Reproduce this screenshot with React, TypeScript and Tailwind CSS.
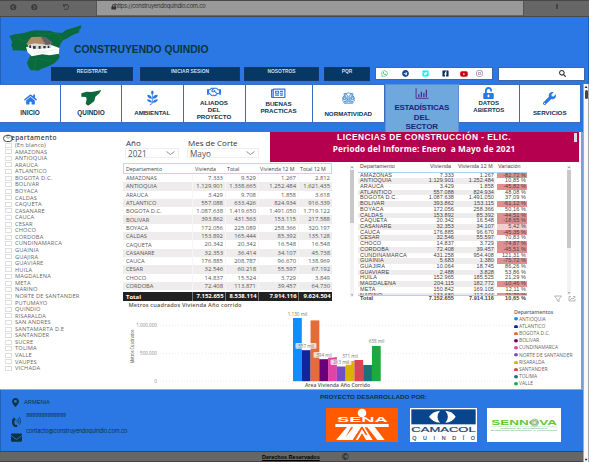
import type { ReactNode } from "react";
import {
  FaHome, FaRegHandshake, FaRegNewspaper, FaWrench, FaUnlockAlt, FaWhatsapp, FaTelegram,
  FaTwitterSquare, FaFacebookSquare, FaYoutube, FaInstagram, FaSearch, FaMapMarkerAlt,
  FaEnvelope, FaLock, FaChevronCircleLeft, FaChevronCircleRight, FaUndo, FaBalanceScale,
} from "react-icons/fa";

const departments = [
  "(En blanco)", "AMAZONAS", "ANTIOQUIA", "ARAUCA", "ATLANTICO", "BOGOTA D.C.", "BOLIVAR", "BOYACA",
  "CALDAS", "CAQUETA", "CASANARE", "CAUCA", "CESAR", "CHOCO", "CORDOBA", "CUNDINAMARCA", "GUAINIA",
  "GUAJIRA", "GUAVIARE", "HUILA", "MAGDALENA", "META", "NARINO", "NORTE DE SANTANDER", "PUTUMAYO",
  "QUINDIO", "RISARALDA", "SAN ANDRES", "SANTAMARTA D.E", "SANTANDER", "SUCRE", "TOLIMA", "VALLE",
  "VAUPES", "VICHADA",
];

const areas = [
  ["AMAZONAS", "7.333", "9.529", "1.267", "2.812"],
  ["ANTIOQUIA", "1.129.901", "1.338.665", "1.252.484", "1.621.435"],
  ["ARAUCA", "3.429", "9.708", "1.858", "3.618"],
  ["ATLANTICO", "557.088", "633.426", "824.934", "916.339"],
  ["BOGOTA D.C.", "1.087.638", "1.419.650", "1.491.050", "1.719.122"],
  ["BOLIVAR", "393.862", "431.563", "153.115", "217.588"],
  ["BOYACA", "172.056", "225.089", "258.366", "320.197"],
  ["CALDAS", "153.892", "165.444", "85.392", "135.128"],
  ["CAQUETA", "20.342", "20.342", "16.548", "16.548"],
  ["CASANARE", "32.353", "36.414", "34.107", "45.738"],
  ["CAUCA", "176.885", "208.787", "96.670", "138.969"],
  ["CESAR", "32.546", "60.218", "55.597", "67.192"],
  ["CHOCO", "14.837", "15.524", "3.729", "3.849"],
  ["CORDOBA", "72.408", "113.871", "39.457", "64.730"],
];

const variations = [
  ["AMAZONAS", "7.333", "1.267", "-82,72 %"],
  ["ANTIOQUIA", "1.129.901", "1.252.484", "10,85 %"],
  ["ARAUCA", "3.429", "1.858", "-45,82 %"],
  ["ATLANTICO", "557.088", "824.934", "48,08 %"],
  ["BOGOTA D.C.", "1.087.638", "1.491.050", "37,09 %"],
  ["BOLIVAR", "393.862", "153.115", "-61,12 %"],
  ["BOYACA", "172.056", "258.366", "50,16 %"],
  ["CALDAS", "153.892", "85.392", "-44,51 %"],
  ["CAQUETA", "20.342", "16.548", "-18,65 %"],
  ["CASANARE", "32.353", "34.107", "5,42 %"],
  ["CAUCA", "176.885", "96.670", "-45,35 %"],
  ["CESAR", "32.546", "55.597", "70,83 %"],
  ["CHOCO", "14.837", "3.729", "-74,87 %"],
  ["CORDOBA", "72.408", "39.457", "-45,51 %"],
  ["CUNDINAMARCA", "431.258", "954.408", "121,31 %"],
  ["GUAINIA", "5.683", "1.380", "-75,72 %"],
  ["GUAJIRA", "10.064", "18.745", "86,26 %"],
  ["GUAVIARE", "2.488", "3.828", "53,86 %"],
  ["HUILA", "152.965", "185.525", "21,29 %"],
  ["MAGDALENA", "204.115", "182.772", "-10,46 %"],
  ["META", "150.842", "169.105", "12,11 %"],
  ["NARINO", "133.680", "117.044", "-11,70 %"],
];

const bars = [
  { name: "ANTIOQUIA", color: "#118dff", top: 318 },
  { name: "ATLANTICO", color: "#12239e", top: 350.2 },
  { name: "BOGOTA D.C.", color: "#e66c37", top: 320.4 },
  { name: "BOLIVAR", color: "#6b007b", top: 359.2 },
  { name: "CUNDINAMARCA", color: "#e044a7", top: 357.2 },
  { name: "NORTE DE SANTANDER", color: "#744ec2", top: 366.5 },
  { name: "RISARALDA", color: "#d9b300", top: 361 },
  { name: "SANTANDER", color: "#d64550", top: 360 },
  { name: "TOLIMA", color: "#197278", top: 365 },
  { name: "VALLE", color: "#1aab40", top: 346 },
];

const barLabels = [
  { text: "1.130 mil", x: 297.5, y: 314, boxed: false },
  { text: "557 mil", x: 306, y: 346, boxed: true },
  { text: "394 mil", x: 324, y: 355, boxed: true },
  { text: "371 mil", x: 350, y: 356.5, boxed: true },
  { text: "263 mil", x: 341, y: 362.3, boxed: true },
  { text: "638 mil", x: 376.5, y: 341.5, boxed: false },
];

function Browser() {
  return (
    <div className="flex h-[17px] border-y border-[#484848] bg-[#666] text-[#3c3c3c]">
      <div className="flex w-[97px] items-start border-r border-[#555] pt-[2.5px] pl-[10px]">
        <FaChevronCircleLeft className="size-[6.5px]" />
        <FaChevronCircleRight className="ml-[14.5px] size-[6.5px]" />
        <FaUndo className="ml-[25px] size-[6px]" />
      </div>
      <div className="flex h-[14px] w-[426px] items-start bg-[#999] pt-[1px] pl-[14px] text-[#333]">
        <FaLock className="mt-[2px] size-[5.5px]" />
        <span className="-ml-[2px] font-[Inter,sans-serif] text-[5.9px] leading-[8px] tracking-[-0.3px]">https://construyendoquindio.com.co</span>
      </div>
      <div className="flex flex-1 justify-center border-l border-[#555] pt-[3px]">
        <span className="h-[5px] w-[2px] bg-[#444]" />
      </div>
    </div>
  );
}

function Logo() {
  return (
    <svg className="-mb-px h-[49px] w-[74px]" viewBox="24 75 222 147">
      <path fill="#0a6a3d" d="M28 108l16-5 28-4 18-5 16-3 44 1 12 5 24 2 12-9 18-5 14-5 14-4-1 8-6 7 1 6-24 10-12 8-13 6-8 12-5 14-1 14 4 9-4 8-11 11-15 8-24 9-10 6-24-2-6-10-4-12 4-10 6-10-8-16-46-1 1-6-5-9 4-10z" />
      <path fill="none" stroke="#298356" strokeWidth="1" d="M50 104l14 20 24-6M105 96l20 8 50-4M175 102l10 18M84 180l30-4 40 8M110 175l-8 34" />
      <path fill="#fff" d="M78 142l22-6 56 0 22 8-1 17-28 5-22-3-32 6-12-12z" />
      <path fill="#dadada" d="M83 130l20-4 50 5v13l-50 4-18-7z" />
      <path fill="#b18a66" d="M79 131l15-20 34-1 12 24-36-4-22 5z" />
      <path fill="#626366" d="M122 110l14 1 21 15v7l-20 2z" />
      <path fill="#333" d="M88 136h5v8h-5zM99 138h8v8h-8zM116 138h6v8h-6zM130 138h7v7h-7zM143 137h5v7h-5z" />
      <path stroke="#c8cccc" fill="none" d="M95 152l36 2 36-6M102 159l40-2" />
    </svg>
  );
}

function HeaderButton({ children, className }: { children: ReactNode; className: string }) {
  return (
    <div className={`h-[14px] border border-[#12386f] bg-[#073763] text-center text-[4.9px] leading-[8px] font-bold text-[#d5dee8] ${className}`}>
      {children}
    </div>
  );
}

function Header() {
  return (
    <header className="h-[67px] border-x border-[#2360b8] bg-[#2b78e4] font-['Liberation_Sans',sans-serif]">
      <div className="flex h-[50px] items-start pt-[8px] pl-[7px]">
        <Logo />
        <h1 className="-ml-[8px] mt-[18px] text-[10.3px] leading-[14px] font-bold text-[#0c343d]">CONSTRUYENDO QUINDIO</h1>
      </div>
      <div className="relative flex pl-[50px]">
        <HeaderButton className="w-[82px] tracking-[-0.06px]">REGISTRATE</HeaderButton>
        <HeaderButton className="ml-[7px] w-[100px]">INICIAR SESION</HeaderButton>
        <HeaderButton className="ml-[4px] w-[75px]">NOSOTROS</HeaderButton>
        <HeaderButton className="ml-[5px] w-[46px]">PQR</HeaderButton>
        <div className="ml-[5px] flex h-[13px] w-[118px] items-center border border-[#3d68a5] bg-white pl-[5px]">
          <FaWhatsapp className="size-[7px] text-[#2fae4a]" />
          <FaTelegram className="ml-[13.5px] size-[7px] text-[#114c92]" />
          <FaTwitterSquare className="ml-[13.5px] size-[7px] text-[#00f0ff]" />
          <FaFacebookSquare className="ml-[12.5px] size-[7px] text-[#0b2f5f]" />
          <FaYoutube className="ml-[11px] size-[8px] text-[#c90000]" />
          <FaInstagram className="ml-[8px] size-[7px] text-[#8e5573]" />
        </div>
        <div className="ml-[5px] flex h-[14px] w-[87px] items-center justify-end border border-[#3d68a5] bg-white pr-[18px] pb-[1px]">
          <FaSearch className="size-[7px] text-[#333]" />
        </div>
      </div>
    </header>
  );
}

function Tab({ icon, lines, className }: { icon: ReactNode; lines: string[]; className: string }) {
  return (
    <div className={`flex h-[39px] flex-col items-center border border-l-0 border-[#3a6cc0] bg-white leading-[7.2px] font-bold text-[#0b3554] ${className}`}>
      <span className="text-[#2b78e4]">{icon}</span>
      {lines.map((line) => <span key={line}>{line}</span>)}
    </div>
  );
}

function Nav() {
  return (
    <nav className="flex h-[48px] bg-[#2b78e4] font-['Liberation_Sans',sans-serif]">
      <Tab className="w-[61px] gap-[2.500px] pt-[8px] text-[6.4px]" icon={<FaHome className="size-[13px]" />} lines={["INICIO"]} />
      <Tab
        className="w-[61px] gap-[2.500px] pt-[5px] text-[6.4px]"
        icon={
          <svg className="h-[16px] w-[21px]" viewBox="0 0 63 48">
            <path fill="#0a6a3d" d="M1 10l16-5 14 1 13-2 17-4-6 10-12 10-3 13-11 9-8 5-7-6 3-14-2-6-14-1z" />
          </svg>
        }
        lines={["QUINDIO"]}
      />
      <Tab
        className="w-[61.5px] gap-[2.500px] pt-[5px] text-[6.2px]"
        icon={
          <svg className="h-[16px] w-[13px]" viewBox="0 0 39 48" fill="currentColor">
            <path d="M19 1q8 7 0 14q-8-7 0-14z" />
            <path d="M18 26Q4 26 4 14q12 0 14 12zM20 26q0-12 15-12q0 12-15 12zM18 38Q5 38 3 28q12 0 15 10zM20 38q2-10 16-10q-3 11-16 10z" />
            <path fill="none" stroke="currentColor" strokeWidth="2.500" d="M19 14v25q0 4-8 5" />
          </svg>
        }
        lines={["AMBIENTAL"]}
      />
      <Tab className="w-[62px] text-[6.2px]" icon={<FaRegHandshake className="size-[14px]" />} lines={["ALIADOS", "DEL", "PROYECTO"]} />
      <Tab className="w-[67px] pt-[1px] text-[6.2px]" icon={<FaRegNewspaper className="-mb-[1px] size-[14.5px]" />} lines={["BUENAS", "PRACTICAS"]} />
      <Tab
        className="w-[72.5px] gap-[6.500px] pt-[6.500px] text-[6.2px]"
        icon={<FaBalanceScale className="h-[12px] w-[13px] fill-white stroke-[#2b78e4] stroke-[40px]" />}
        lines={["NORMATIVIDAD"]}
      />
      <div className="flex h-[48px] w-[73.5px] flex-col items-center border border-b-0 border-[#5d8fd2] bg-[#6fa8dc] pt-[3px] text-[8px] leading-[9.6px] font-bold text-[#20247b]">
        <svg className="mb-[4px] h-[12px] w-[14px]" viewBox="0 0 42 36" fill="none" stroke="#4b2a94" strokeWidth="3">
          <path d="M2 1v32h40" />
          <path strokeWidth="4" d="M11 29v-9M19 29V12M27 29V16M35 29V6" />
        </svg>
        <span className="tracking-[-0.3px]">ESTADÍSTICAS</span>
        <span>DEL</span>
        <span className="tracking-[-0.15px]">SECTOR</span>
      </div>
      <Tab className="w-[61.5px] pt-[2px] text-[6px]" icon={<FaUnlockAlt className="mb-[1px] h-[12px] w-[11px]" />} lines={["DATOS", "ABIERTOS"]} />
      <Tab className="w-[60.5px] gap-[4.500px] pt-[6.500px] text-[6.2px]" icon={<FaWrench className="size-[13px]" />} lines={["SERVICIOS"]} />
    </nav>
  );
}

function DepartmentFilter() {
  return (
    <aside className="w-[123px] pt-[2px] pl-[3px] text-[#666]">
      <div className="flex h-[8px] items-center">
        <span className="flex h-[7px] w-[10px] items-center justify-center rounded-full border border-[#444] text-[5px] font-bold">©</span>
        <span className="-ml-[2px] text-[6.6px] leading-[8px] font-semibold tracking-[0.35px] text-[#444]">epartamento</span>
      </div>
      {departments.map((name) => (
        <div key={name} className="flex h-[6.57px] items-center gap-[3.5px] pl-[2px]">
          <span className="h-[5px] w-[6.5px] border border-[#dedede]" />
          <span className="text-[5.7px] leading-[6.5px] tracking-[0.16px] whitespace-nowrap">{name}</span>
        </div>
      ))}
    </aside>
  );
}

function Select({ label, value, className }: { label: string; value: string; className: string }) {
  return (
    <div className={className}>
      <div className="pl-[1px] text-[8px] leading-[11px] text-[#333]">{label}</div>
      <div className="flex h-[10px] items-center justify-between border border-[#eee] pr-[3px] pl-[2px] text-[8.2px] leading-[9px] text-[#555]">
        {value}
        <svg className="h-[4px] w-[9px]" viewBox="0 0 9 4" fill="none" stroke="#777" strokeWidth="0.8"><path d="M0.5 0.5l4 3 4-3" /></svg>
      </div>
    </div>
  );
}

const areaGrid = "grid grid-cols-[69px_33px_33px_40px_34px] items-center";

function AreaTable() {
  return (
    <div className="mt-[1px] w-[209px] text-[5.9px] leading-[8px] text-[#555]">
      <div className={`${areaGrid} h-[11px] border border-[#b9dced] text-[5.3px] text-[#444]`}>
        <span className="pl-[2px]">Departamento</span>
        <span className="pl-[2px]">Vivienda</span>
        <span className="pl-[1px]">Total</span>
        <span className="pl-[1px] whitespace-nowrap">Vivienda 12 M</span>
        <span className="pl-[1px] whitespace-nowrap">Total 12 M</span>
      </div>
      {areas.map(([name, ...values]) => (
        <div key={name} className={`${areaGrid} h-[8.3px] odd:bg-[#eeecec]`}>
          <span className="pl-[3px] text-[5.7px]">{name}</span>
          {values.map((value, i) => <span key={i} className="h-full border-l border-[#f6f6f6] pr-[2px] text-right">{value}</span>)}
        </div>
      ))}
      <div className={`${areaGrid} mt-[2px] h-[9px] bg-[#222] text-[5.9px] font-bold text-white`}>
        <span className="pl-[3px]">Total</span>
        {["7.152.655", "8.538.114", "7.914.116", "9.624.504"].map((value) => (
          <span key={value} className="h-full border-l border-[#777] pr-[1.5px] text-right">{value}</span>
        ))}
      </div>
    </div>
  );
}

const variationGrid = "grid grid-cols-[63px_34px_40px_32px] items-center";

function variationTone(value: string) {
  if (value.startsWith("-")) return "bg-[#dd9090]";
  return value === "5,42 %" ? "bg-[#f2cfcf]" : "bg-white";
}

function VariationTable() {
  return (
    <div className="w-[169px] pt-[1px] font-['Liberation_Sans',sans-serif] text-[5.5px] leading-[5.72px] tracking-[0.1px] text-[#444]">
      <div className={`${variationGrid} h-[9.5px] border-b border-[#a9d5ea] text-[5.3px]`}>
        <span className="pl-[2px]">Departamento</span>
        <span className="pl-[9px]">Vivienda</span>
        <span className="pl-[3px] whitespace-nowrap">Vivienda 12 M</span>
        <span className="pl-[3px]">Variación</span>
      </div>
      <div className="h-[123px] overflow-hidden border-b border-[#a9d5ea]">
        {variations.map(([name, housing, year, change]) => (
          <div key={name} className={`${variationGrid} h-[5.72px] even:bg-[#eeecec]`}>
            <span className="pl-[2px] tracking-[0.16px]">{name}</span>
            <span className="pr-[1px] text-right">{housing}</span>
            <span className="pr-[1px] text-right">{year}</span>
            <span className="h-full bg-white pl-[2px]">
              <span className={`block h-full pr-[1px] text-right ${variationTone(change)}`}>{change}</span>
            </span>
          </div>
        ))}
      </div>
      <div className={`${variationGrid} h-[6px] font-bold`}>
        <span className="pl-[2px]">Total</span>
        <span className="pr-[1px] text-right">7.152.655</span>
        <span className="pr-[1px] text-right">7.914.116</span>
        <span className="pr-[1px] text-right">10,65 %</span>
      </div>
    </div>
  );
}

function Scroller({ className, thumb }: { className: string; thumb: string }) {
  return (
    <div className={`flex w-[4px] flex-col items-center justify-between bg-[#f3f3f3] ${className}`}>
      <span className="text-[3px] leading-[4px] text-[#777]">▲</span>
      <span className={`w-[3.5px] bg-[#c8c8c8] ${thumb}`} />
      <span className="flex-1" />
      <span className="text-[3px] leading-[4px] text-[#777]">▼</span>
    </div>
  );
}

function Chart() {
  return (
    <svg className="h-[89px] w-[390px]" viewBox="123 300 390 89" fontFamily="'Open Sans', sans-serif">
      <text x="128.5" y="306.6" fontSize="5.6" fontWeight="600" fill="#555" textLength="113">Metros cuadrados Vivienda Año corrido</text>
      {[["1.000.000", 325.3], ["500.000", 353.3], ["0", 381.2]].map(([label, y]) => (
        <g key={label}>
          <line x1="160" x2="513" y1={y} y2={y} stroke="#e2e2e2" strokeWidth="0.7" strokeDasharray="1 2" />
          <text x="157" y={Number(y) + 1.6} fontSize="4.6" textAnchor="end" fill="#888">{label}</text>
        </g>
      ))}
      <text transform="translate(134.3 363.5) rotate(-90)" fontSize="4.8" fill="#555" textLength="34" lengthAdjust="spacingAndGlyphs">Metros Cuadrados</text>
      {bars.map((bar, i) => (
        <rect key={bar.name} x={293 + i * 8.77} y={bar.top} width="8.8" height={381.2 - bar.top} fill={bar.color} />
      ))}
      {barLabels.map((label) => (
        <g key={label.text}>
          {label.boxed && <rect x={label.x - 10.5} y={label.y - 2.9} width="21" height="5.6" rx="1" fill="#fff" fillOpacity="0.75" />}
          <text x={label.x} y={label.y + 1.6} fontSize="4.6" textAnchor="middle" fill="#777">{label.text}</text>
        </g>
      ))}
      <text x="305" y="387.2" fontSize="5" fontWeight="600" fill="#555" textLength="65">Area Vivienda Año Corrido</text>
    </svg>
  );
}

function Legend() {
  return (
    <div className="pt-[9px] pl-[1px] text-[4.95px] leading-[7.22px] text-[#666]">
      <div className="h-[6.5px] text-[5.2px] leading-[6.5px] font-semibold">Departamentos</div>
      {bars.map((bar) => (
        <div key={bar.name} className="flex h-[7.22px] items-center gap-[1px] whitespace-nowrap">
          <svg className="h-[3.6px] w-[4px]" viewBox="0 0 4 3.6"><ellipse cx="2" cy="1.8" rx="2" ry="1.8" fill={bar.color} /></svg>
          {bar.name}
        </div>
      ))}
    </div>
  );
}

function Report() {
  return (
    <main className="flex h-[258px] border-r-2 border-b border-r-[#7f9ed3] border-b-[#9aa9bd] bg-white font-['Open_Sans',sans-serif]">
      <DepartmentFilter />
      <div className="flex-1">
        <div className="flex h-[30px]">
          <Select className="ml-[2px] w-[54px] pt-[5px]" label="Año" value="2021" />
          <Select className="ml-[8px] w-[72px] pt-[5px]" label="Mes de Corte" value="Mayo" />
          <div className="ml-[11px] flex w-[309px] bg-[#b4004e] pt-[1px] text-white">
            <div className="flex flex-1 flex-col items-center pl-[4px]">
              <span className="font-['Liberation_Sans',sans-serif] text-[8.4px] leading-[9px] font-bold tracking-[0.46px]">LICENCIAS DE CONSTRUCCIÓN - ELIC.</span>
              <span className="mt-[3px] text-[8.2px] leading-[8.5px] font-bold tracking-[0.16px] whitespace-pre">Periodo del Informe: Enero  a Mayo de 2021</span>
              <span className="font-['Liberation_Sans',sans-serif] text-[5.6px] leading-[6px] tracking-[0.15px] text-[#7e2a48]">Label ReporteAC</span>
            </div>
            <span className="mr-[2px] h-[9px] w-[3px] bg-[#dcdcdc]" />
          </div>
        </div>
        <div className="flex h-[138px]">
          <AreaTable />
          <Scroller className="mt-[3px] ml-[18px] h-[132px]" thumb="mt-px h-[53px]" />
          <div className="ml-[4px]"><VariationTable /></div>
          <div className="flex flex-1 justify-end pr-[9px]">
            <div className="flex flex-col items-end">
              <Scroller className="mt-[3px] mr-[1px] h-[130px]" thumb="mt-px h-[78px]" />
            </div>
          </div>
        </div>
        <div className="flex">
          <Chart />
          <div className="relative">
            <Legend />
            <svg className="absolute -top-[5px] left-[40px] h-[7px] w-[24px]" viewBox="0 0 24 7" fill="none" stroke="#999" strokeWidth="0.7">
              <path d="M1.5 1h7L6 4v2.5l-2-1V4zM18 1.500h-2v4.500h6V4M20 1.500h2v1M17 5l2-2 1 1 2-2" />
            </svg>
          </div>
        </div>
      </div>
    </main>
  );
}

function SenaLogo() {
  return (
    <svg className="h-[34px] w-[72px]" viewBox="0 0 216 102">
      <rect width="216" height="102" fill="#ff5a00" />
      <circle cx="108" cy="15" r="13" fill="#fff" />
      <text x="33" y="42" fontFamily="'Liberation Sans', sans-serif" fontSize="21" fontWeight="700" fill="#fff" textLength="152" lengthAdjust="spacingAndGlyphs">SENA</text>
      <path fill="#fff" d="M28 48h160v9h-42l30 39h-22l-30-38h-8l24 38h-20l-12-20-12 20H52l30-38h-7L54 96H30l33-39H28z" />
      <path fill="#ff5a00" d="M106 56l4 0 14 24-5 1-11-18-19 33h-9z" />
    </svg>
  );
}

function CamacolLogo() {
  return (
    <svg className="h-[34px] w-[67px]" viewBox="0 0 201 102" fontFamily="'Liberation Sans', sans-serif">
      <rect width="201" height="102" fill="#fff" />
      <rect x="4" y="4" width="193" height="45" fill="#08458c" />
      <path fill="#fff" d="M90 8q-22 2-33 18 11 16 33 18-15-18 0-36zM106 8q22 2 31 18-9 16-31 18 15-18 0-36z" />
      <text x="4" y="73" fontSize="24" fill="#173e68" stroke="#173e68" strokeWidth="0.6" textLength="193" lengthAdjust="spacingAndGlyphs">CAMACOL</text>
      <text x="7" y="95" fontSize="16" fill="#173e68" stroke="#173e68" strokeWidth="0.4" textLength="188">QUINDÍO</text>
    </svg>
  );
}

function SennovaLogo() {
  return (
    <svg className="h-[34px] w-[74px]" viewBox="0 0 222 102" fontFamily="'Liberation Sans', sans-serif">
      <rect width="222" height="102" fill="#fff" />
      <text x="13" y="52" fontSize="21" fontWeight="700" fill="#5fc92e" textLength="197" lengthAdjust="spacingAndGlyphs">SENNOVA</text>
      <circle cx="143" cy="44" r="11" fill="#bcdac6" fillOpacity="0.6" stroke="#75b686" strokeWidth="2" />
      <circle cx="143" cy="44" r="6" fill="none" stroke="#d99078" strokeWidth="2" />
      <path stroke="#81c795" d="M12 56h198" />
      <text x="40" y="62" fontSize="6" fill="#55a86f" textLength="140" lengthAdjust="spacingAndGlyphs">Sistema de Investigación</text>
      <text x="11" y="69" fontSize="6" fill="#55a86f" textLength="199" lengthAdjust="spacingAndGlyphs">Desarrollo Tecnológico e Innovación</text>
    </svg>
  );
}

function Footer() {
  return (
    <footer className="font-['Liberation_Sans',sans-serif] text-[#0c343d]">
      <div className="flex h-[61px] border-l border-[#2360b8] bg-[#2b78e4]">
        <div className="w-[319px] pt-[8px] pl-[10px] text-[6.2px] leading-[8px]">
          <div className="flex h-[17px] items-start gap-[4px]">
            <FaMapMarkerAlt className="h-[9px] w-[9px]" />
            <span className="text-[5.7px]">ARMENIA</span>
          </div>
          <div className="flex h-[15px] items-start gap-[5px]">
            <svg className="mt-[1px] h-[11px] w-[10px]" viewBox="0 0 30 33" fill="none" stroke="currentColor">
              <path fill="currentColor" stroke="none" d="M7 6l4-1 3 7-4 3q-1 7 3 12l5-1 1 7-4 2Q2 31 3 17 3 9 7 6z" />
              <path strokeWidth="2" d="M17 11q4 4 1 9M21 7q6 7 1 16M25 3q8 11 1 23" />
            </svg>
            <span className="-mt-[4px] font-[Inter,sans-serif] text-[5.2px] tracking-[-0.16px]">9999999999999</span>
          </div>
          <div className="flex items-start gap-[4px]">
            <FaEnvelope className="mt-[2px] h-[11px] w-[11px]" />
            <span className="-mt-[3.500px] font-[Inter,sans-serif] text-[5.7px] tracking-[-0.18px]">contacto@construyendoquindio.com.co</span>
          </div>
        </div>
        <div className="pt-[2px]">
          <div className="h-[16px] text-[6.25px] leading-[9px] font-bold">PROYECTO DESARROLLADO POR:</div>
          <div className="flex pl-[6px]">
            <SenaLogo />
            <div className="ml-[12px]"><CamacolLogo /></div>
            <div className="ml-[10px]"><SennovaLogo /></div>
          </div>
        </div>
      </div>
      <div className="flex h-[11px] items-center border-y border-[#444] bg-[#666] pl-[262px] text-black">
        <span className="w-[80px] text-[5.5px] leading-[8px] font-bold underline">Derechos Reservados</span>
        <span className="text-[9px] leading-[8px]">©</span>
      </div>
    </footer>
  );
}

export default function App() {
  return (
    <div className="h-[462px] w-[589px] overflow-hidden bg-white">
      <Browser />
      <Header />
      <div className="flex">
        <div className="w-[583px]">
          <Nav />
          <Report />
          <Footer />
        </div>
        <div className="flex h-[378px] flex-1 flex-col items-center border-x border-[#aaa] bg-[#f8f8f8]">
          <span className="text-[4px] leading-[5px]">▲</span>
          <span className="mt-px h-[9px] w-[3px] rounded-full bg-[#444]" />
          <span className="flex-1" />
          <span className="text-[4px] leading-[5px]">▼</span>
        </div>
      </div>
    </div>
  );
}
